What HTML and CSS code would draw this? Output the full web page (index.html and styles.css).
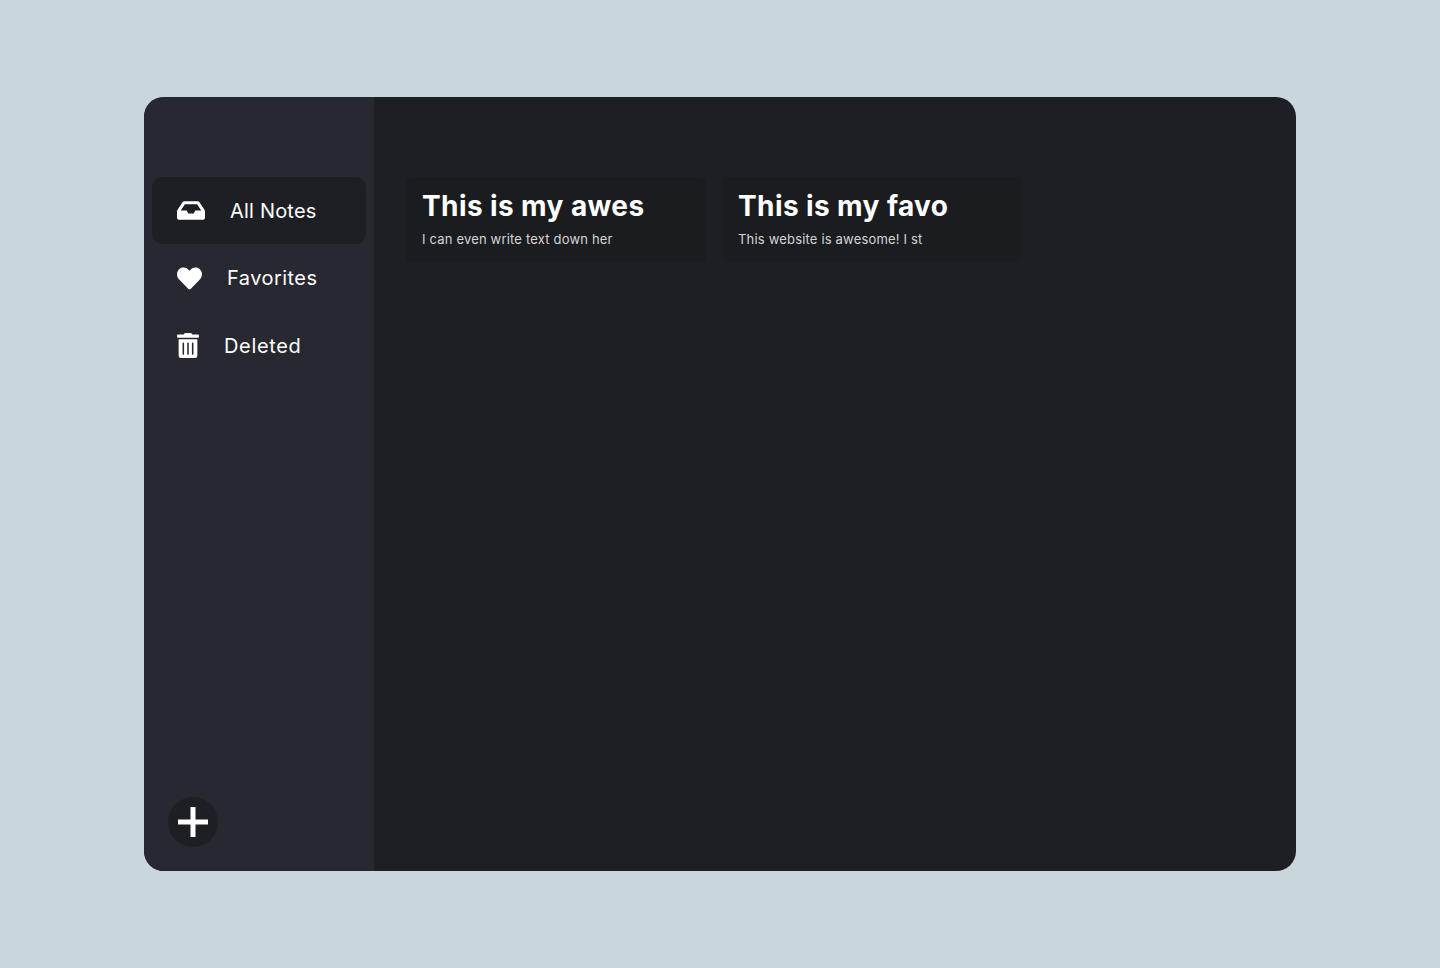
FILE: index.html
```html
<!DOCTYPE html>
<html lang="en">
<head>
<meta charset="utf-8">
<title>Notes</title>
<link rel="stylesheet" href="styles.css">
</head>
<body>
<div class="app">
  <aside class="sidebar">
    <nav class="nav">
      <a class="nav-item active">
        <svg class="icon" width="28" height="25" viewBox="0 0 576 512"><path d="M567.938 243.908L462.25 85.374A48.003 48.003 0 0 0 422.311 64H153.689a48 48 0 0 0-39.938 21.374L8.062 243.908A47.994 47.994 0 0 0 0 270.533V400c0 26.51 21.49 48 48 48h480c26.51 0 48-21.49 48-48V270.533a47.994 47.994 0 0 0-8.062-26.625zM162.252 128h251.497l85.333 128H376l-32 64H232l-32-64H76.918l85.334-128z"/></svg>
        <span class="label label-tight">All Notes</span>
      </a>
      <a class="nav-item">
        <svg class="icon" width="25" height="25" viewBox="0 0 512 512"><path d="M462.3 62.6C407.5 15.9 326 24.3 275.7 76.2L256 96.5l-19.7-20.3C186.1 24.3 104.5 15.9 49.7 62.6c-62.8 53.6-66.1 149.8-9.9 207.9l193.5 199.8c12.5 12.9 32.8 12.9 45.3 0l193.5-199.8c56.3-58.1 53-154.3-9.8-207.9z"/></svg>
        <span class="label label-mid">Favorites</span>
      </a>
      <a class="nav-item">
        <svg class="icon" width="22" height="25" viewBox="0 0 448 512"><path d="M32 464a48 48 0 0 0 48 48h288a48 48 0 0 0 48-48V128H32zm272-256a16 16 0 0 1 32 0v224a16 16 0 0 1-32 0zm-96 0a16 16 0 0 1 32 0v224a16 16 0 0 1-32 0zm-96 0a16 16 0 0 1 32 0v224a16 16 0 0 1-32 0zM432 32H312l-9.4-18.7A24 24 0 0 0 281.1 0H166.8a23.72 23.72 0 0 0-21.4 13.3L136 32H16A16 16 0 0 0 0 48v32a16 16 0 0 0 16 16h416a16 16 0 0 0 16-16V48a16 16 0 0 0-16-16z"/></svg>
        <span class="label label-wide">Deleted</span>
      </a>
    </nav>
    <button class="add" type="button" aria-label="Add note">
      <svg width="30" height="30" viewBox="0 0 30 30"><path d="M12.5 0h5v12.5H30v5H17.500V30h-5V17.500H0v-5h12.500z"/></svg>
    </button>
  </aside>
  <main class="notes">
    <article class="note">
      <h2 class="note-title">This is my awes</h2>
      <p class="note-text">I can even write text down her</p>
    </article>
    <article class="note">
      <h2 class="note-title">This is my favo</h2>
      <p class="note-text">This website is awesome! I st</p>
    </article>
  </main>
</div>
</body>
</html>
```
FILE: styles.css
```css
* { box-sizing: border-box; }
html, body { height: 100%; }
body {
  margin: 0;
  background: #c9d6dc;
  font-family: Inter, "Liberation Sans", sans-serif;
  display: flex;
  align-items: center;
  justify-content: center;
}
.app {
  width: 1152px;
  height: 774px;
  display: flex;
  border-radius: 20px;
  overflow: hidden;
  background: #1e1f24;
}
.sidebar {
  width: 230px;
  flex: none;
  background: #282830;
  padding: 80px 8px 24px;
  display: flex;
  flex-direction: column;
  justify-content: space-between;
  align-items: flex-start;
}
.nav { width: 100%; display: flex; flex-direction: column; gap: 0.5px; }
.nav-item {
  height: 67px;
  display: flex;
  align-items: center;
  gap: 25px;
  padding-left: 25px;
  border-radius: 10px;
  color: #fff;
}
.nav-item.active { background: #1e1f24; }
.icon { fill: #fff; flex: none; }
.label { font-size: 20px; line-height: 30px; }
.label-tight { letter-spacing: 0.2px; }
.label-mid { letter-spacing: 0.45px; }
.label-wide { letter-spacing: 0.65px; }
.add {
  width: 50px;
  height: 50px;
  margin-left: 16px;
  padding: 0;
  border: 0;
  border-radius: 50%;
  background: #1e1f24;
  display: flex;
  align-items: center;
  justify-content: center;
}
.add svg { fill: #fff; }
.notes {
  flex: 1;
  padding: 80px 32px;
  display: flex;
  gap: 16px;
  align-items: flex-start;
}
.note {
  width: 300px;
  height: 85px;
  padding: 12px 16px;
  background: #1b1c20;
  border-radius: 6px;
  overflow: hidden;
}
.note-title {
  margin: 0;
  font-size: 28px;
  line-height: 34px;
  font-weight: 700;
  letter-spacing: 0.4px;
  color: #fff;
  white-space: nowrap;
}
.note-text {
  margin: 6px 0 0;
  font-size: 13px;
  line-height: 20px;
  letter-spacing: 0.18px;
  color: #d5d5d5;
  white-space: nowrap;
}
```
